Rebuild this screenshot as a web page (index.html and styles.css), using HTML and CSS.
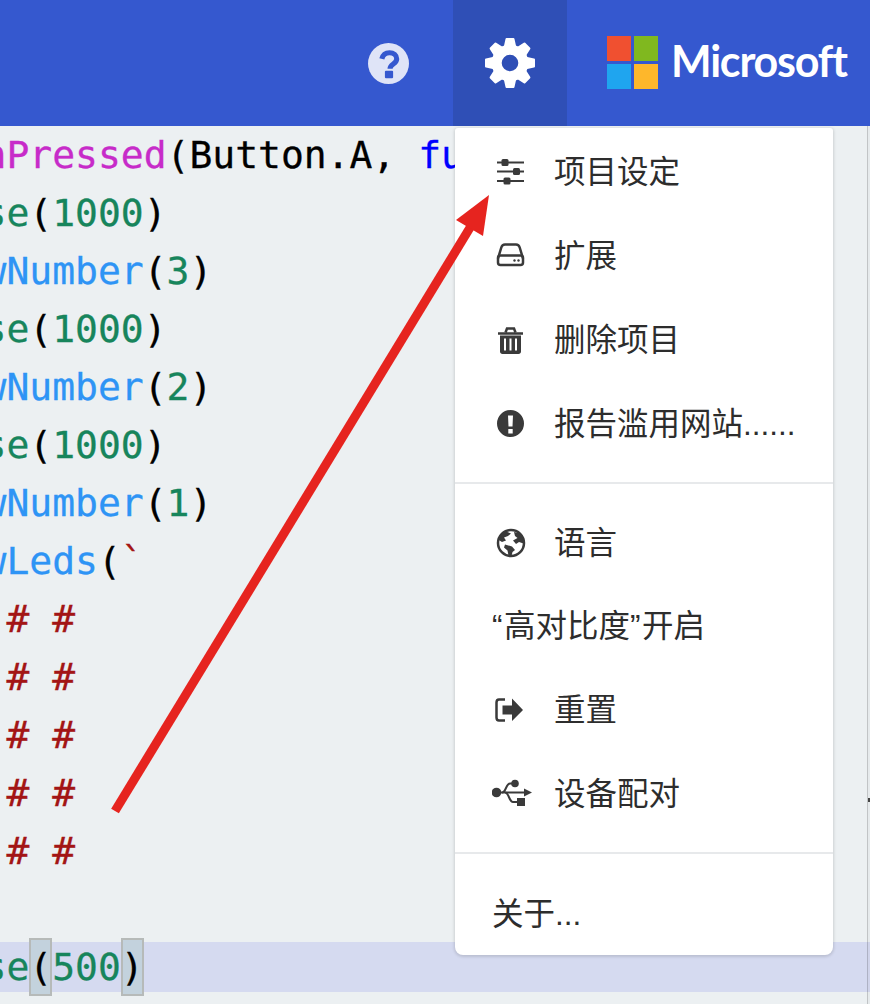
FILE: index.html
```html
<!DOCTYPE html>
<html lang="zh-CN">
<head>
<meta charset="utf-8">
<title>MakeCode</title>
<link rel="stylesheet" href="styles.css">
</head>
<body>
<div class="app">
  <header class="topbar">
    <div class="tool">
      <svg class="help-icon" viewBox="0 0 40 40" width="41" height="41">
        <circle class="help-disc" cx="20" cy="20" r="20"/>
        <path class="help-mark" d="M13.5 15.5C14.5 11.5 17.5 9.5 21 9.5c4 0 7 2.500 7 6 0 4.800-6.500 5-6.500 9.500"/>
        <rect class="help-dot" x="16.500" y="27" width="8" height="7.500" rx="1"/>
      </svg>
    </div>
    <div class="tool tool-active">
      <svg class="gear" viewBox="-25 -25 50 50" width="50" height="50">
        <circle class="gear-ring" r="13.300"/>
        <path class="gear-tooth" d="M-6.500-15-4.500-24Q-4.300-25-3.500-25H3.500Q4.300-25 4.500-24L6.500-15Z"/>
        <path class="gear-tooth" d="M-6.500-15-4.500-24Q-4.300-25-3.500-25H3.500Q4.300-25 4.500-24L6.500-15Z" transform="rotate(45)"/>
        <path class="gear-tooth" d="M-6.500-15-4.500-24Q-4.300-25-3.500-25H3.500Q4.300-25 4.500-24L6.500-15Z" transform="rotate(90)"/>
        <path class="gear-tooth" d="M-6.500-15-4.500-24Q-4.300-25-3.500-25H3.500Q4.300-25 4.500-24L6.500-15Z" transform="rotate(135)"/>
        <path class="gear-tooth" d="M-6.500-15-4.500-24Q-4.300-25-3.500-25H3.500Q4.300-25 4.500-24L6.500-15Z" transform="rotate(180)"/>
        <path class="gear-tooth" d="M-6.500-15-4.500-24Q-4.300-25-3.500-25H3.500Q4.300-25 4.500-24L6.500-15Z" transform="rotate(225)"/>
        <path class="gear-tooth" d="M-6.500-15-4.500-24Q-4.300-25-3.500-25H3.500Q4.300-25 4.500-24L6.500-15Z" transform="rotate(270)"/>
        <path class="gear-tooth" d="M-6.500-15-4.500-24Q-4.300-25-3.500-25H3.500Q4.300-25 4.500-24L6.500-15Z" transform="rotate(315)"/>
      </svg>
    </div>
    <div class="brand">
      <svg class="ms-logo" viewBox="0 0 51 53" width="51" height="53">
        <rect class="ms-red" width="24" height="25"/>
        <rect class="ms-green" x="27" width="24" height="25"/>
        <rect class="ms-blue" y="28" width="24" height="25"/>
        <rect class="ms-yellow" x="27" y="28" width="24" height="25"/>
      </svg>
      <span class="brand-name">Microsoft</span>
    </div>
  </header>

  <main class="editor">
    <div class="code">
      <div class="line"><span class="event">nPressed</span>(Button.A, <span class="kw">function</span> () {</div>
      <div class="line"><span class="num">se</span>(<span class="num">1000</span>)</div>
      <div class="line"><span class="fn">wNumber</span>(<span class="num">3</span>)</div>
      <div class="line"><span class="num">se</span>(<span class="num">1000</span>)</div>
      <div class="line"><span class="fn">wNumber</span>(<span class="num">2</span>)</div>
      <div class="line"><span class="num">se</span>(<span class="num">1000</span>)</div>
      <div class="line"><span class="fn">wNumber</span>(<span class="num">1</span>)</div>
      <div class="line"><span class="fn">wLeds</span>(<span class="str">`</span></div>
      <div class="line str"> # #</div>
      <div class="line str"> # #</div>
      <div class="line str"> # #</div>
      <div class="line str"> # #</div>
      <div class="line str"> # #</div>
      <div class="line"> </div>
      <div class="line line-current"><span class="num">se</span><span class="bracket">(</span><span class="num">500</span><span class="bracket">)</span></div>
    </div>
    <div class="scroll-rail"><span class="scroll-tick"></span></div>
  </main>

  <nav class="menu">
    <div class="menu-group">
      <div class="item">
        <svg class="ico" viewBox="0 0 40 30" width="40" height="30">
          <path class="ico-thin" d="M5 5.500H32M5 14.500H32M5 24H32"/>
          <rect x="9.500" y="2" width="7" height="7" rx="1.500"/>
          <rect x="21" y="11" width="7" height="7" rx="1.500"/>
          <rect x="11.500" y="20.500" width="7" height="7" rx="1.500"/>
        </svg>
        <span class="label">项目设定</span>
      </div>
      <div class="item">
        <svg class="ico" viewBox="0 0 40 30" width="40" height="30">
          <path class="ico-line" d="M6 17.500 9.300 6.500C9.800 4.800 10.800 3.500 13 3.500H24C26.200 3.500 27.200 4.800 27.700 6.500L31 17.500"/>
          <rect class="ico-line" x="6" y="14.500" width="25" height="9.500" rx="2.500"/>
          <circle cx="22.500" cy="19.500" r="1.200"/>
          <circle cx="26.500" cy="19.500" r="1.200"/>
        </svg>
        <span class="label">扩展</span>
      </div>
      <div class="item">
        <svg class="ico" viewBox="0 0 40 30" width="40" height="30">
          <path class="ico-line" d="M6 8.500H31"/>
          <path class="ico-line" d="M13.500 7.500 15 3.500H22L23.500 7.500"/>
          <path fill-rule="evenodd" d="M8 10.500H29V26.500C29 28 28 29 26.500 29H10.500C9 29 8 28 8 26.500ZM12 13.500V25.500H14V13.500ZM17.500 13.500V25.500H19.500V13.500ZM23 13.500V25.500H25V13.500Z"/>
        </svg>
        <span class="label">删除项目</span>
      </div>
      <div class="item">
        <svg class="ico" viewBox="0 0 40 30" width="40" height="30">
          <path fill-rule="evenodd" d="M18.500 1A13.500 13.500 0 1 1 18.500 28 13.500 13.500 0 0 1 18.500 1ZM16 6.500 16.500 17.500H20.500L21 6.500ZM16.300 20V24.500H20.700V20Z"/>
        </svg>
        <span class="label">报告滥用网站......</span>
      </div>
    </div>
    <div class="menu-group">
      <div class="item">
        <svg class="ico" viewBox="0 0 40 30" width="40" height="30">
          <circle class="ico-line" cx="19" cy="15" r="13"/>
          <path d="M14 3.500C10 4.500 7 7.500 6 11.500L10 14 14 12.500 12 9.500 16 8 19 5.500ZM13 16.500 20 18.500 23 22 20.500 24 19.500 28 16.500 27.500 15.500 22.500 12 19.500ZM22 4 27 5 31 10 31.500 15.500 27 14 24 16 21 12.500 25.500 10 23 8Z"/>
        </svg>
        <span class="label">语言</span>
      </div>
      <div class="item item-plain"><span class="label"><span class="quote">“</span>高对比度<span class="quote">”</span>开启</span></div>
      <div class="item">
        <svg class="ico" viewBox="0 0 40 30" width="40" height="30">
          <path class="ico-line" d="M13 4.500H7C5 4.500 4.500 5.500 4.500 7.500V22.500C4.500 24.500 5 25.500 7 25.500H13"/>
          <path d="M10.500 10.500H20V3.500L31 15 20 26V19.500H10.500Z"/>
        </svg>
        <span class="label">重置</span>
      </div>
      <div class="item">
        <svg class="ico" viewBox="0 0 40 30" width="40" height="30">
          <path class="ico-thin" d="M4 13.500H33"/>
          <path class="ico-thin" d="M10 13.500C14 13.500 14 4.500 18 4.500H21"/>
          <path class="ico-thin" d="M13 13.500C17 13.500 17 23 21 23H27"/>
          <circle cx="4.500" cy="13.500" r="4.800"/>
          <circle cx="23" cy="4.500" r="3.800"/>
          <rect x="25" y="19" width="8" height="8"/>
          <path d="M32 9.500 40 13.500 32 17.500Z"/>
        </svg>
        <span class="label">设备配对</span>
      </div>
    </div>
    <div class="menu-group menu-group-last">
      <div class="item"><span class="label">关于...</span></div>
    </div>
  </nav>

  <svg class="annotation" viewBox="0 0 870 1004" width="870" height="1004">
    <path class="arrow-shaft" d="M115 811 471 226"/>
    <path class="arrow-head" d="M489 195 456 220 483 236Z"/>
  </svg>
</div>
</body>
</html>
```

FILE: styles.css
```css
* { box-sizing: border-box; }

html, body {
  margin: 0;
  height: 100%;
  overflow: hidden;
}

body {
  font-family: "Liberation Sans", "Noto Sans CJK SC", sans-serif;
  color: #2d2d2d;
  background: #ecf0f2;
}

.app {
  position: relative;
  height: 1004px;
  overflow: hidden;
}

/* top bar */
.topbar {
  display: flex;
  justify-content: flex-end;
  align-items: stretch;
  height: 126px;
  background: #3558cf;
}

.tool {
  display: flex;
  align-items: center;
  justify-content: center;
  width: 114px;
}

.tool:first-child { margin-right: 8px; }

.tool-active { background: #2f4fb6; }

.help-disc { fill: #dfe4f7; }
.help-mark { fill: none; stroke: #3558cf; stroke-width: 5; }
.help-dot { fill: #3558cf; }

.gear-ring { fill: none; stroke: #fff; stroke-width: 10; }
.gear-tooth { fill: #fff; }

.brand {
  display: flex;
  align-items: center;
  gap: 13px;
  width: 303px;
  padding: 0 0 1px 40px;
}

.ms-logo { flex: none; }

.ms-red { fill: #f05030; }
.ms-green { fill: #80b81f; }
.ms-blue { fill: #1fa5ef; }
.ms-yellow { fill: #feb72b; }

.brand-name {
  margin-bottom: 4px;
  font-family: Lato, sans-serif;
  font-size: 43px;
  font-weight: 700;
  letter-spacing: -1.2px;
  color: #fff;
}

/* editor */
.editor {
  position: relative;
  height: 878px;
  overflow: hidden;
}

.code {
  margin-left: -16.5px;
  font-family: "DejaVu Sans Mono", monospace;
  font-size: 38px;
  line-height: 58px;
  color: #000;
  -webkit-text-stroke: 0.3px;
}

.line {
  height: 58px;
  white-space: pre;
}

.line-current {
  background: linear-gradient(transparent 4px, #d5daf0 4px, #d5daf0 54px, transparent 54px);
}

.bracket {
  display: inline-block;
  height: 58px;
  background: #c3d2dd;
  outline: 2px solid #b6bab9;
  outline-offset: -2px;
}

.event { color: #c72bc9; }
.kw { color: #0000ff; }
.num { color: #17855c; }
.fn { color: #2e94f5; }
.str { color: #a31515; }

.scroll-rail {
  position: absolute;
  top: 0;
  right: 0;
  bottom: 0;
  width: 3px;
  background: rgba(0, 0, 0, 0.025);
  border-left: 1px solid rgba(0, 0, 0, 0.16);
}

.scroll-tick {
  position: absolute;
  top: 672px;
  right: 0;
  width: 2px;
  height: 4px;
  background: #444;
}

/* settings menu */
.menu {
  position: absolute;
  top: 128px;
  left: 455px;
  width: 378px;
  height: 827px;
  background: #fff;
  border-radius: 3px 3px 8px 8px;
  box-shadow: 0 1px 3px 1px rgba(0, 0, 0, 0.13);
}

.menu-group { padding-top: 2px; }

.menu-group + .menu-group {
  margin-top: 16px;
  padding-top: 17px;
  border-top: 2px solid #e7e9eb;
}

.menu-group + .menu-group-last { padding-top: 17px; }

.item {
  display: flex;
  align-items: center;
  gap: 22px;
  height: 84px;
  padding-left: 37px;
  font-size: 31.5px;
  white-space: nowrap;
}

.item-plain { height: 83px; }

.label { margin-bottom: 7px; }

.menu-group-last .label { margin-bottom: 4px; }

.quote { letter-spacing: 1.5px; }

.ico {
  flex: none;
  fill: #3a3a3a;
}

.ico-line {
  fill: none;
  stroke: #3a3a3a;
  stroke-width: 2.5;
}

.ico-thin {
  fill: none;
  stroke: #3a3a3a;
  stroke-width: 2;
}

/* annotation arrow */
.annotation {
  position: absolute;
  top: 0;
  left: 0;
  pointer-events: none;
}

.arrow-shaft {
  fill: none;
  stroke: #e6241f;
  stroke-width: 9;
}

.arrow-head { fill: #e6241f; }
```
